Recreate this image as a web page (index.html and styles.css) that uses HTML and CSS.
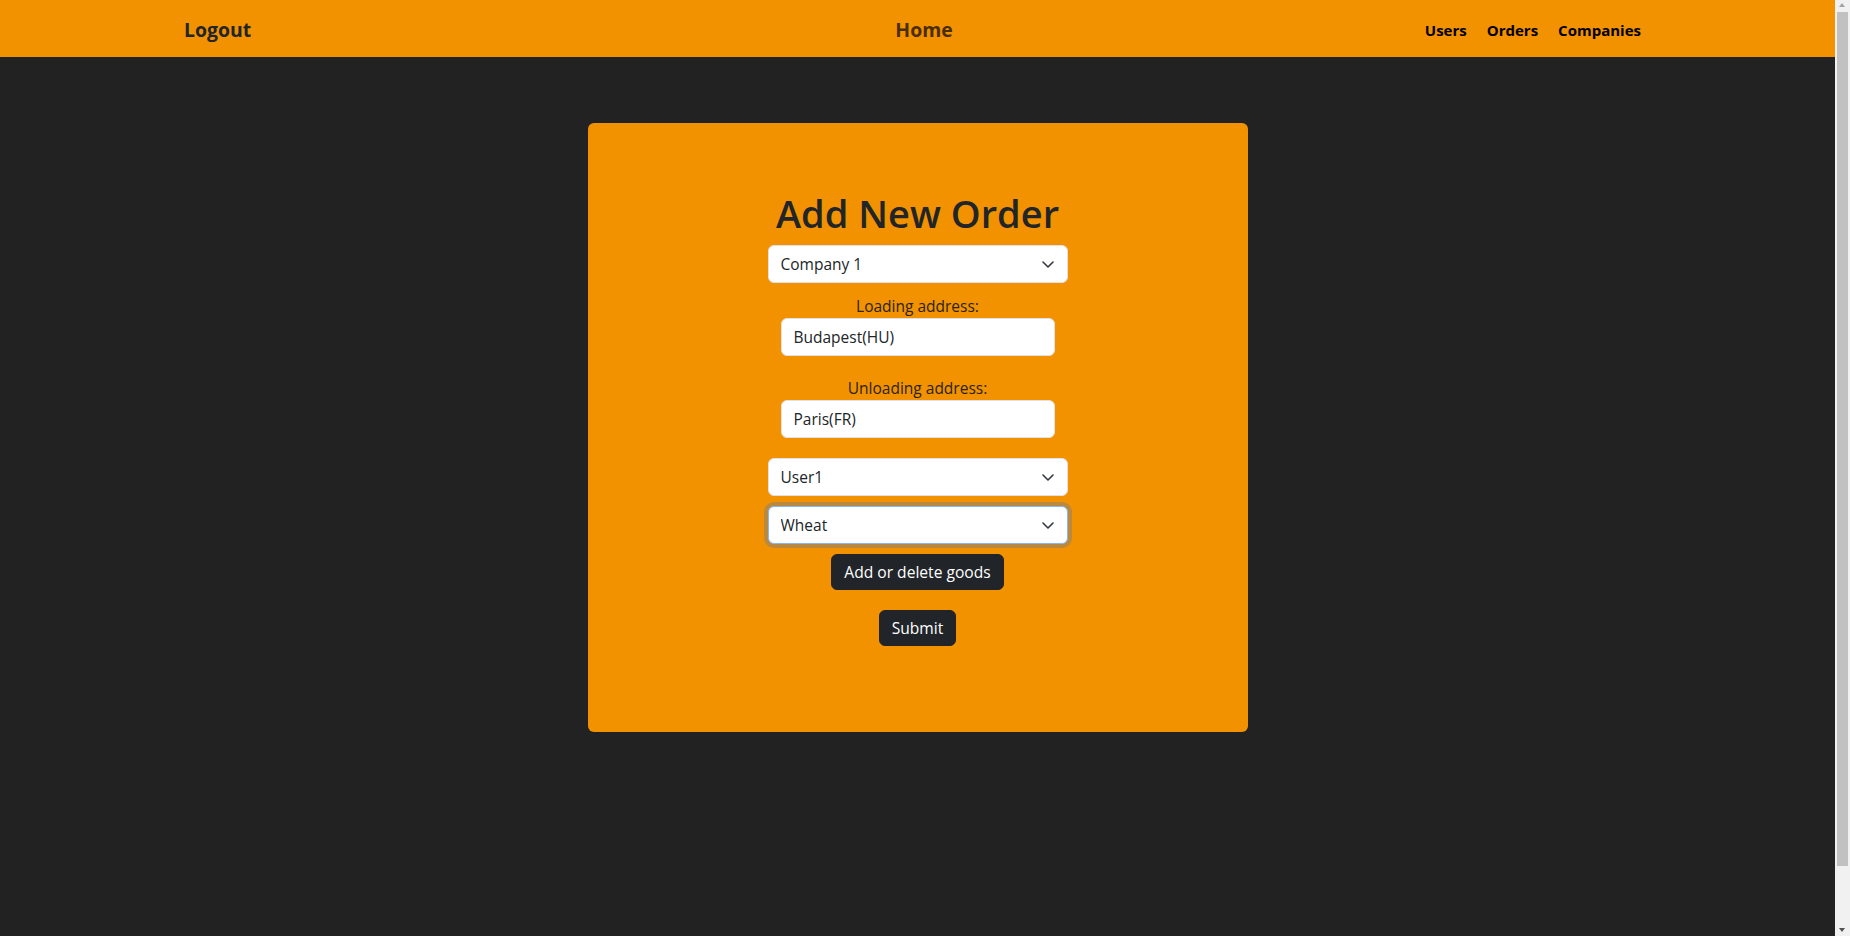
FILE: index.html
```html
<!DOCTYPE html>
<html lang="en">
<head>
<meta charset="utf-8">
<title>Add New Order</title>
<link rel="stylesheet" href="styles.css">
</head>
<body>
<div class="viewport">
  <header class="navbar">
    <a class="brand" href="#">Logout</a>
    <a class="brand home" href="#">Home</a>
    <nav class="nav-links">
      <a class="nav-link" href="#">Users</a>
      <a class="nav-link" href="#">Orders</a>
      <a class="nav-link" href="#">Companies</a>
    </nav>
  </header>
  <main class="page">
    <section class="card">
      <h1 class="title">Add New Order</h1>
      <form class="order-form">
        <div class="select-wrap">
          <select class="form-select"><option>Company 1</option></select>
          <svg class="chevron" viewBox="0 0 12 7" width="12" height="7"><polyline points="1,1 6,6 11,1" fill="none" stroke="#343a40" stroke-width="1.6" stroke-linecap="round" stroke-linejoin="round"/></svg>
        </div>
        <label class="field-label gap-s">Loading address:</label>
        <input class="form-control" type="text" value="Budapest(HU)">
        <label class="field-label gap-l">Unloading address:</label>
        <input class="form-control" type="text" value="Paris(FR)">
        <div class="select-wrap gap-l">
          <select class="form-select"><option>User1</option></select>
          <svg class="chevron" viewBox="0 0 12 7" width="12" height="7"><polyline points="1,1 6,6 11,1" fill="none" stroke="#343a40" stroke-width="1.6" stroke-linecap="round" stroke-linejoin="round"/></svg>
        </div>
        <div class="select-wrap gap-m">
          <select class="form-select is-focused"><option>Wheat</option></select>
          <svg class="chevron" viewBox="0 0 12 7" width="12" height="7"><polyline points="1,1 6,6 11,1" fill="none" stroke="#343a40" stroke-width="1.6" stroke-linecap="round" stroke-linejoin="round"/></svg>
        </div>
        <button class="btn gap-m" type="button">Add or delete goods</button>
        <button class="btn gap-l" type="submit">Submit</button>
      </form>
    </section>
  </main>
</div>
<div class="scrollbar" aria-hidden="true">
  <span class="arrow arrow-up"></span>
  <span class="thumb"></span>
  <span class="arrow arrow-down"></span>
</div>
</body>
</html>
```

FILE: styles.css
```css
* { box-sizing: border-box; }
html, body { margin: 0; padding: 0; }
body {
  background: #222222;
  font-family: "Open Sans", "Noto Sans", sans-serif;
  font-size: 15.5px;
  color: #212529;
}
a { text-decoration: none; }

.viewport {
  margin-right: 15px;
  min-height: 100vh;
}

.navbar {
  height: 57px;
  background: #f29200;
  display: grid;
  grid-template-columns: 1fr auto 1fr;
  align-items: center;
  padding: 2px 194px 0 184px;
}
.brand {
  font-size: 19.4px;
  font-weight: 700;
  line-height: 30px;
  color: #212529;
  justify-self: start;
}
.brand.home {
  justify-self: center;
  padding-left: 23px;
  color: #4a2d00;
}
.nav-links {
  justify-self: end;
  display: flex;
  gap: 20px;
}
.nav-link {
  font-size: 15px;
  font-weight: 700;
  line-height: 24px;
  color: #000;
}

.page {
  padding-top: 66px;
}
.card {
  width: 660px;
  margin: 0 auto;
  background: #f29200;
  border-radius: 6px;
  padding: 66px 0 86px;
}
.title {
  margin: 0 0 8px;
  height: 48px;
  line-height: 48px;
  font-size: 38px;
  font-weight: 600;
  text-align: center;
  color: #212529;
}
.order-form {
  display: flex;
  flex-direction: column;
  align-items: center;
}
.gap-s { margin-top: 11px; }
.gap-m { margin-top: 10px; }
.gap-l { margin-top: 20px; }

.select-wrap {
  position: relative;
  width: 300px;
  height: 38px;
}
.form-select, .form-control {
  display: block;
  height: 38px;
  font-family: inherit;
  font-size: 15.5px;
  color: #212529;
  background: #fff;
  border: 1px solid #dee2e6;
  border-radius: 6px;
  padding: 0 12px;
  outline: none;
}
.form-select {
  width: 300px;
  appearance: none;
  -webkit-appearance: none;
  padding-right: 36px;
}
.form-select.is-focused {
  border-color: #86b7fe;
  box-shadow: 0 0 0 4px rgba(13, 110, 253, 0.25);
}
.chevron {
  position: absolute;
  right: 14px;
  top: 16px;
  pointer-events: none;
}
.form-control { width: 274px; }
.field-label {
  display: block;
  height: 24px;
  line-height: 24px;
  font-size: 15.5px;
  color: #2a2418;
  text-align: center;
}
.btn {
  height: 36px;
  padding: 0 12px;
  font-family: inherit;
  font-size: 15.6px;
  line-height: 24px;
  color: #fff;
  background: #212529;
  border: 1px solid #212529;
  border-radius: 6px;
}

.scrollbar {
  position: fixed;
  top: 0;
  right: 0;
  width: 15px;
  height: 100vh;
  background: #f1f1f1;
}
.thumb {
  position: absolute;
  left: 2px;
  top: 12px;
  width: 11px;
  height: 854px;
  background: #c1c1c1;
}
.arrow {
  position: absolute;
  left: 4px;
  width: 0;
  height: 0;
  border-left: 3.5px solid transparent;
  border-right: 3.5px solid transparent;
}
.arrow-up {
  top: 3px;
  border-bottom: 4px solid #a3a3a3;
}
.arrow-down {
  bottom: 4px;
  border-top: 4px solid #505050;
}
```
